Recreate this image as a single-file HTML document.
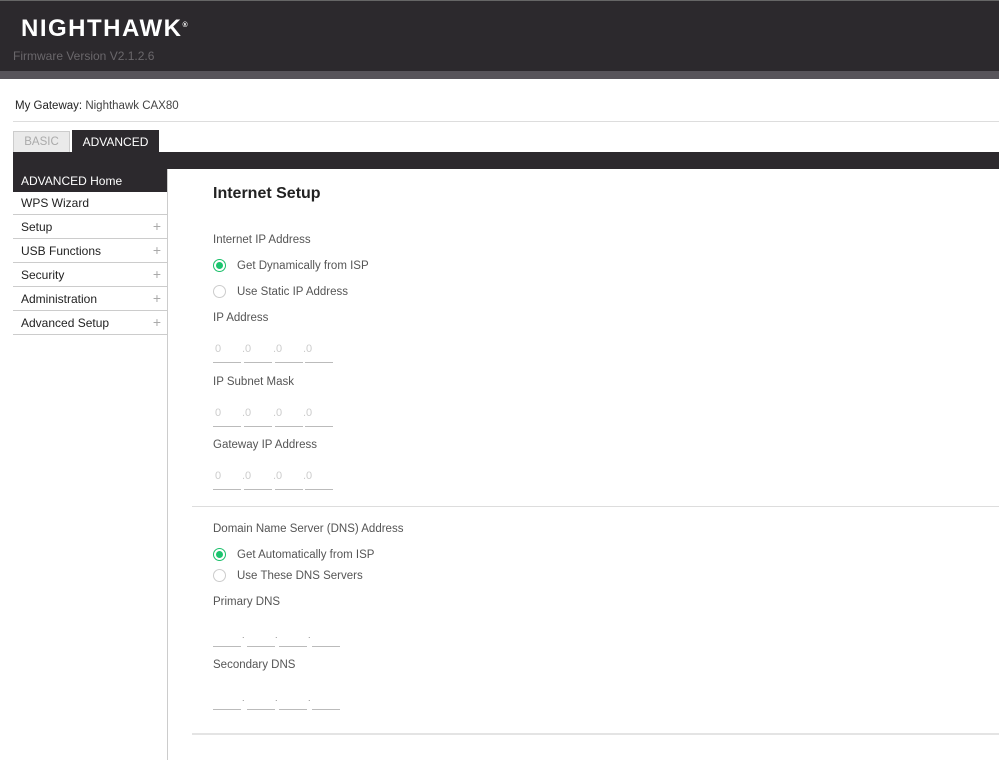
<!DOCTYPE html>
<html><head><style>
*{margin:0;padding:0;box-sizing:border-box}
body{width:999px;height:760px;background:#fff;font-family:"Liberation Sans",sans-serif;position:relative;overflow:hidden;color:#333}
.a{position:absolute}
.hdr{left:0;top:0;width:999px;height:71px;background:#2c292d;border-top:1px solid #666}
.bar{left:0;top:71px;width:999px;height:8px;background:#57545a}
.logo{left:21px;top:15px;color:#fff;font-size:24px;font-weight:bold;letter-spacing:1.5px}
.fw{left:13px;top:49px;color:#6a676b;font-size:12px}
.gw{left:15px;top:100px;font-size:11.5px;color:#222}
.gw span{color:#444}
.lt{font-size:11.5px;color:#555}
.side div{position:absolute;left:13px;width:154px;height:24px;border-bottom:1px solid #ccc;font-size:12px;padding:5px 0 0 8px;color:#222}
.side div i{position:absolute;right:6px;top:3px;font-style:normal;color:#aaa;font-size:14px}
.radio{width:13px;height:13px;border-radius:50%;border:1px solid #ccc}
.on{border:1px solid #1bbf6a}
.on:after{content:"";position:absolute;left:2px;top:2px;width:7px;height:7px;border-radius:50%;background:#1bc46e}
.f{height:1px;background:#bbb}
.z{font-size:11px;color:#ccc}
</style></head><body>
<div class="a hdr"></div><div class="a bar"></div>
<div class="a logo">NIGHTHAWK<sup style="font-size:7px">®</sup></div>
<div class="a fw">Firmware Version V2.1.2.6</div>
<div class="a gw">My Gateway: <span>Nighthawk CAX80</span></div>
<div class="a" style="left:13px;top:121px;width:986px;height:1px;background:#ddd"></div>
<div class="a" style="left:13px;top:131px;width:57px;height:21px;background:#eaeaea;border:1px solid #ccc;border-bottom:none;color:#aaa;font-size:11.5px;text-align:center;padding-top:4px">BASIC</div>
<div class="a" style="left:72px;top:130px;width:87px;height:22px;background:#2c292d;color:#fff;font-size:12px;text-align:center;padding-top:5px">ADVANCED</div>
<div class="a" style="left:13px;top:152px;width:986px;height:17px;background:#2c292d"></div>
<div class="a" style="left:167px;top:169px;width:1px;height:591px;background:#ccc"></div>
<div class="side">
<div style="top:169px;height:23px;background:#2c292d;color:#fff;border:none">ADVANCED Home</div>
<div style="top:191px">WPS Wizard</div>
<div style="top:215px">Setup<i>+</i></div>
<div style="top:239px">USB Functions<i>+</i></div>
<div style="top:263px">Security<i>+</i></div>
<div style="top:287px">Administration<i>+</i></div>
<div style="top:311px">Advanced Setup<i>+</i></div>
</div>
<div class="a" style="left:213px;top:185px;font-size:16px;font-weight:bold;color:#222">Internet Setup</div>
<div class="a lt" style="left:213px;top:234px">Internet IP Address</div>
<div class="a radio on" style="left:213px;top:259px"></div><div class="a lt" style="left:237px;top:260px">Get Dynamically from ISP</div>
<div class="a radio" style="left:213px;top:285px"></div><div class="a lt" style="left:237px;top:286px">Use Static IP Address</div>
<div class="a lt" style="left:213px;top:312px">IP Address</div>
<div class="a lt" style="left:213px;top:376px">IP Subnet Mask</div>
<div class="a lt" style="left:213px;top:439px">Gateway IP Address</div>
<div class="a z" style="left:215px;top:343px">0</div><div class="a z" style="left:242px;top:343px">.0</div><div class="a z" style="left:273px;top:343px">.0</div><div class="a z" style="left:303px;top:343px">.0</div>
<div class="a f" style="left:213px;top:362px;width:28px"></div><div class="a f" style="left:244px;top:362px;width:28px"></div><div class="a f" style="left:275px;top:362px;width:28px"></div><div class="a f" style="left:305px;top:362px;width:28px"></div>
<div class="a z" style="left:215px;top:407px">0</div><div class="a z" style="left:242px;top:407px">.0</div><div class="a z" style="left:273px;top:407px">.0</div><div class="a z" style="left:303px;top:407px">.0</div>
<div class="a f" style="left:213px;top:426px;width:28px"></div><div class="a f" style="left:244px;top:426px;width:28px"></div><div class="a f" style="left:275px;top:426px;width:28px"></div><div class="a f" style="left:305px;top:426px;width:28px"></div>
<div class="a z" style="left:215px;top:470px">0</div><div class="a z" style="left:242px;top:470px">.0</div><div class="a z" style="left:273px;top:470px">.0</div><div class="a z" style="left:303px;top:470px">.0</div>
<div class="a f" style="left:213px;top:489px;width:28px"></div><div class="a f" style="left:244px;top:489px;width:28px"></div><div class="a f" style="left:275px;top:489px;width:28px"></div><div class="a f" style="left:305px;top:489px;width:28px"></div>
<div class="a" style="left:192px;top:506px;width:807px;height:1px;background:#ddd"></div>
<div class="a lt" style="left:213px;top:523px">Domain Name Server (DNS) Address</div>
<div class="a radio on" style="left:213px;top:548px"></div><div class="a lt" style="left:237px;top:549px">Get Automatically from ISP</div>
<div class="a radio" style="left:213px;top:569px"></div><div class="a lt" style="left:237px;top:570px">Use These DNS Servers</div>
<div class="a lt" style="left:213px;top:596px">Primary DNS</div>
<div class="a lt" style="left:213px;top:659px">Secondary DNS</div>
<div class="a f" style="left:213px;top:646px;width:28px"></div><div class="a f" style="left:247px;top:646px;width:28px"></div><div class="a f" style="left:279px;top:646px;width:28px"></div><div class="a f" style="left:312px;top:646px;width:28px"></div>
<div class="a f" style="left:213px;top:709px;width:28px"></div><div class="a f" style="left:247px;top:709px;width:28px"></div><div class="a f" style="left:279px;top:709px;width:28px"></div><div class="a f" style="left:312px;top:709px;width:28px"></div>
<div class="a" style="left:242px;top:630px;font-size:9px;color:#888">.</div><div class="a" style="left:275px;top:630px;font-size:9px;color:#888">.</div><div class="a" style="left:308px;top:630px;font-size:9px;color:#888">.</div>
<div class="a" style="left:242px;top:693px;font-size:9px;color:#888">.</div><div class="a" style="left:275px;top:693px;font-size:9px;color:#888">.</div><div class="a" style="left:308px;top:693px;font-size:9px;color:#888">.</div>
<div class="a" style="left:192px;top:733px;width:807px;height:2px;background:#e4e4e4"></div>
</body></html>
